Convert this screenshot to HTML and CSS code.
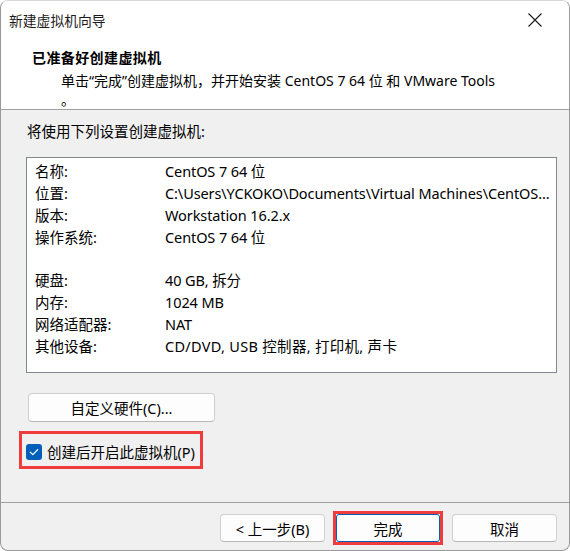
FILE: index.html
```html
<!DOCTYPE html>
<html lang="zh-CN">
<head>
<meta charset="utf-8">
<title>新建虚拟机向导</title>
<link rel="stylesheet" href="styles.css">
</head>
<body>
<div class="window">
  <div class="titlebar">
    <span class="title">新建虚拟机向导</span>
    <svg class="close" width="16" height="16" viewBox="0 0 16 16"><path d="M1.5 1.5 L14.5 14.5 M14.5 1.5 L1.5 14.5" stroke="#1a1a1a" stroke-width="1.1" fill="none"/></svg>
  </div>
  <div class="header">
    <div class="h-title">已准备好创建虚拟机</div>
    <div class="h-sub">单击“完成”创建虚拟机，并开始安装 CentOS 7 64 位 和 VMware Tools</div>
    <div class="h-sub">。</div>
  </div>
  <div class="content">
    <div class="intro">将使用下列设置创建虚拟机:</div>
    <div class="listbox">
      <div class="row"><span class="k">名称:</span><span class="v">CentOS 7 64 位</span></div>
      <div class="row"><span class="k">位置:</span><span class="v">C:\Users\YCKOKO\Documents\Virtual Machines\CentOS...</span></div>
      <div class="row"><span class="k">版本:</span><span class="v">Workstation 16.2.x</span></div>
      <div class="row"><span class="k">操作系统:</span><span class="v">CentOS 7 64 位</span></div>
      <div class="row"></div>
      <div class="row"><span class="k">硬盘:</span><span class="v">40 GB, 拆分</span></div>
      <div class="row"><span class="k">内存:</span><span class="v">1024 MB</span></div>
      <div class="row"><span class="k">网络适配器:</span><span class="v">NAT</span></div>
      <div class="row"><span class="k">其他设备:</span><span class="v wide">CD/DVD, USB 控制器, 打印机, 声卡</span></div>
    </div>
    <button class="btn custom">自定义硬件(C)...</button>
    <div class="highlight check-wrap">
      <span class="checkbox"><svg width="16" height="16" viewBox="0 0 16 16"><path d="M4.3 8.2 L6.8 10.6 L11.7 5.6" stroke="#fff" stroke-width="1.3" fill="none" stroke-linecap="round" stroke-linejoin="round"/></svg></span>
      <span class="check-label">创建后开启此虚拟机(P)</span>
    </div>
  </div>
  <div class="footer">
    <button class="btn fbtn">&lt; 上一步(B)</button>
    <div class="highlight primary-wrap"><button class="btn fbtn primary">完成</button></div>
    <button class="btn fbtn">取消</button>
  </div>
</div>
</body>
</html>
```

FILE: styles.css
```css
html, body {
  margin: 0;
  padding: 0;
  background: #ffffff;
}
body {
  font-family: "Noto Sans", "Noto Sans CJK SC", sans-serif;
  color: #000;
}
.window {
  width: 570px;
  height: 551px;
  box-sizing: border-box;
  border: 1px solid #9a9a9a;
  border-top-color: #d8d8d8;
  border-radius: 8px;
  background: #f0f0f0;
  overflow: hidden;
  display: flex;
  flex-direction: column;
}
.window > * {
  flex-shrink: 0;
}
.titlebar {
  height: 37px;
  background: #fff;
  display: flex;
  align-items: center;
  justify-content: space-between;
  padding: 0 26px 0 8px;
  font-size: 14px;
  color: #1a1a1a;
}
.title {
  font-family: "Noto Sans CJK SC", sans-serif;
  font-size: 13.8px;
  line-height: 20px;
}
.close {
  display: block;
  margin-top: 1px;
}
.header {
  background: #fff;
  height: 72px;
  box-sizing: border-box;
  border-bottom: 1px solid #a0a0a0;
  padding: 9px 0 0 31px;
}
.h-title {
  font-family: "Noto Sans CJK SC", sans-serif;
  font-weight: 700;
  font-size: 14px;
  letter-spacing: 0.4px;
  line-height: 20px;
}
.h-sub {
  font-size: 14px;
  line-height: 21px;
  padding-left: 29px;
  margin-top: 3px;
}
.h-sub + .h-sub {
  margin-top: -2px;
}
.content {
  flex: 1;
  padding: 11px 0 0 25px;
  display: flex;
  flex-direction: column;
  align-items: flex-start;
  border-bottom: 1px solid #a0a0a0;
}
.content > * {
  flex-shrink: 0;
}
.intro {
  font-size: 14.5px;
  line-height: 20px;
  padding-left: 1px;
}
.listbox {
  margin-top: 16px;
  width: 531px;
  height: 216px;
  box-sizing: border-box;
  border: 1px solid #828790;
  background: #fff;
  padding: 3px 8px 0 8px;
}
.row {
  display: flex;
  height: 21.9px;
  line-height: 21.9px;
  font-size: 14.5px;
  white-space: nowrap;
}
.k {
  width: 130px;
  flex: none;
}
.v {
  flex: 1;
  min-width: 0;
  letter-spacing: -0.1px;
}
.v.wide {
  letter-spacing: 0.3px;
}
.btn {
  font-family: "Noto Sans", "Noto Sans CJK SC", sans-serif;
  font-size: 14.5px;
  color: #000;
  background: #fdfdfd;
  border: 1px solid #d0d0d0;
  border-bottom-color: #b8b8b8;
  border-radius: 4px;
  padding: 0;
  box-sizing: border-box;
}
.custom {
  margin-top: 20px;
  margin-left: 2px;
  width: 187px;
  height: 29px;
}
.highlight {
  border: 3px solid #ef3b3b;
}
.check-wrap {
  margin-top: 9px;
  margin-left: -7px;
  height: 38px;
  box-sizing: border-box;
  padding: 0 5px 0 4px;
  display: flex;
  align-items: center;
  gap: 5px;
}
.checkbox {
  width: 16px;
  height: 16px;
  border-radius: 3px;
  background: #005fb8;
  display: block;
  margin-top: 4px;
}
.checkbox svg {
  display: block;
}
.check-label {
  font-size: 14.5px;
  line-height: 20px;
  margin-top: 4px;
}
.footer {
  height: 47px;
  display: flex;
  justify-content: flex-end;
  align-items: flex-start;
  padding: 11px 12px 0 0;
  box-sizing: border-box;
  gap: 8px;
}
.fbtn {
  width: 105px;
  height: 28px;
}
.primary-wrap {
  margin-top: -3px;
  margin-right: 1px;
  display: flex;
}
.primary {
  width: 104px;
  border: 1px solid #005fb8;
  border-radius: 3px;
}
```
